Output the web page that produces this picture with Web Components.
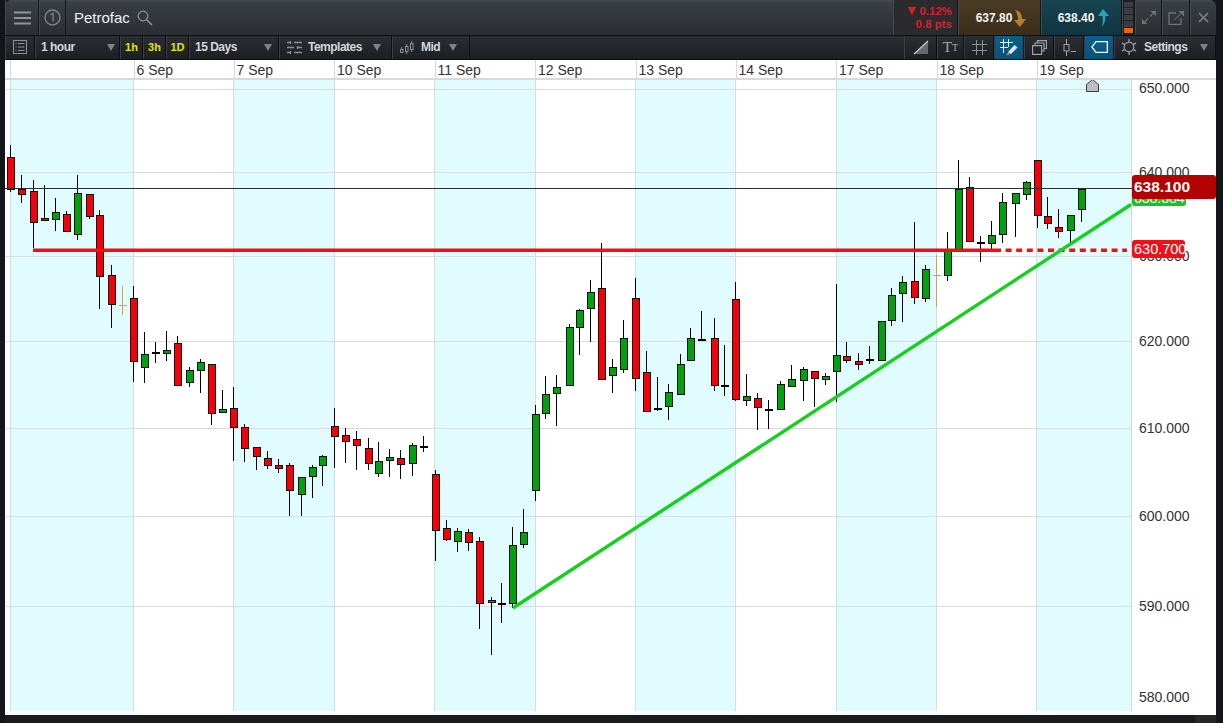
<!DOCTYPE html>
<html><head><meta charset="utf-8"><style>
html,body{margin:0;padding:0;background:#14171b;overflow:hidden}
body{width:1223px;height:723px;font-family:"Liberation Sans",Arial,sans-serif}
</style></head><body>
<chart-window></chart-window>
<script>
const ICON={
menu:'<svg width="17" height="14" viewBox="0 0 17 14"><path d="M0 1.500h17M0 7h17M0 12.500h17" stroke="#8f959b" stroke-width="2.200"/></svg>',
one:'<svg width="17" height="17" viewBox="0 0 17 17"><circle cx="8.500" cy="8.500" r="7.500" fill="none" stroke="#7e848a" stroke-width="1.300"/><path d="M6.500 5.800 9 4.400V12.600" fill="none" stroke="#7e848a" stroke-width="1.300"/></svg>',
search:'<svg width="16" height="16" viewBox="0 0 16 16"><circle cx="6" cy="6" r="4.800" fill="none" stroke="#8f959b" stroke-width="1.200"/><path d="M9.500 9.500 15 15" stroke="#8f959b" stroke-width="1.500"/></svg>',
list:'<svg width="14" height="14" viewBox="0 0 14 14"><rect x=".5" y=".5" width="13" height="13" fill="none" stroke="#8b9197"/><path d="M2.500 3.500h1M5 3.500h6.500M2.500 7h1M5 7h6.500M2.500 10.500h1M5 10.500h6.500" stroke="#8b9197"/></svg>',
sliders:'<svg width="15" height="13" viewBox="0 0 15 13"><path d="M0 1.500h3M7 1.500h8M0 6.500h7M11 6.500h4M0 11.500h3M7 11.500h8" stroke="#8b9197" stroke-width="1.300"/><path d="M3.500 0v3M10.500 5v3M3.500 10v3" stroke="#8b9197" stroke-width="1.300"/></svg>',
candles:'<svg width="14" height="13" viewBox="0 0 14 13"><g fill="none" stroke="#8b9197"><rect x=".5" y="8.500" width="2.500" height="3"/><path d="M1.700 6v2.500"/><rect x="5.500" y="5.500" width="2.500" height="5"/><path d="M6.700 3v2.500M6.700 10.500V13"/><rect x="10.500" y="2.500" width="2.500" height="6"/><path d="M11.700 0v2.500M11.700 8.500V11"/></g></svg>',
draw:'<svg width="16" height="16" viewBox="0 0 16 16"><path d="M1 15 15 2v13z" fill="#666b70"/><path d="M1 15 15 2" stroke="#c6cacd" stroke-width="1.200"/></svg>',
grid:'<svg width="15" height="15" viewBox="0 0 15 15"><path d="M4.500 0v15M10.500 0v15M0 4.500h15M0 10.500h15" stroke="#8b9197"/></svg>',
gridpen:'<svg width="18" height="17" viewBox="0 0 18 17"><path d="M3.500 0v14M8.500 0v8M0 3.500h13M0 8.500h8" stroke="#e7eef2"/><path d="M8 13l6.500-7 3 2.500-6.500 6.500z" fill="#dbe6ec"/><path d="M6.500 16.500l1.500-3.500 2.500 2z" fill="#f08a2c"/></svg>',
layers:'<svg width="15" height="15" viewBox="0 0 15 15"><g fill="none" stroke="#9ca2a7" stroke-width="1.200"><rect x=".6" y="5.600" width="9" height="8.800"/><path d="M3 5.500V3h9v8h-2.500"/><path d="M5.500 3V.6h9V8.500H12"/></g></svg>',
order:'<svg width="13" height="17" viewBox="0 0 13 17"><g fill="none" stroke="#9ca2a7"><path d="M3.500 0v5M3.500 12v5"/><rect x="1" y="5.500" width="5" height="6.500"/></g><path d="M8 12.500h5" stroke="#9ca2a7"/></svg>',
tag:'<svg width="17" height="12" viewBox="0 0 17 12"><path d="M5 .7H16.300V11.300H5L.9 6z" fill="none" stroke="#f0f5f8" stroke-width="1.300"/></svg>',
gear:'<svg width="16" height="16" viewBox="0 0 16 16"><circle cx="8" cy="8" r="4.700" fill="none" stroke="#8b9197" stroke-width="1.500"/><path d="M8 0v3M8 13v3M1 4l2.600 1.500M12.400 10.500 15 12M1 12l2.600-1.500M12.400 5.500 15 4" stroke="#8b9197" stroke-width="1.500"/></svg>',
expand:'<svg width="14" height="13" viewBox="0 0 14 13"><path d="M8.500 0H14v5zM0 13V8l5.500 5z" fill="#6d7378"/><path d="M11 2.500 8 5.500M3 10.500l3-3" stroke="#6d7378" stroke-width="1.200"/></svg>',
pop:'<svg width="16" height="14" viewBox="0 0 16 14"><path d="M8 2H1v11.300h12V7" fill="none" stroke="#6d7378" stroke-width="1.300"/><path d="M11 0h5v5zM6 9l7-6.500" fill="#6d7378" stroke="#6d7378"/></svg>',
close:'<svg width="11" height="11" viewBox="0 0 11 11"><path d="M1 1l9 9M10 1l-9 9" stroke="#7b8186" stroke-width="1.600"/></svg>',
down:'<svg width="13" height="18" viewBox="0 0 13 18"><path d="M1 1c5 1 7 4 7 9h4l-6 8-6-7h4C4 7 3 4 1 1z" fill="#b5802a"/></svg>',
up:'<svg width="13" height="18" viewBox="0 0 13 18"><path d="M7 0l6 7H9.500c0 5-1 8-4 11 1.500-4 1.500-7 1-11H2z" fill="#27a3b8"/></svg>'
};
function def(name,css,html){
  customElements.define(name,class extends HTMLElement{
    constructor(){super();const s=this.attachShadow({mode:'open'});
      s.innerHTML='<style>'+css+'</style>'+(typeof html==='function'?html(this):html);}
  });
}
def('tool-cell',`
:host{display:flex;align-items:center;height:100%;box-sizing:border-box;padding-bottom:1px;border-right:1px solid #0c0e10;border-left:1px solid #3a3f45;color:#d4d7da;font:bold 12px "Liberation Sans",sans-serif;letter-spacing:-.5px;flex:none}
:host([active]){background:linear-gradient(#0a5f8c,#07527a)}
:host([center]){justify-content:center}
:host([yellow]){color:#e6e400;font-size:11px;letter-spacing:0;justify-content:center}
:host([caret]) .c{display:block}
.c{display:none;margin-left:auto;width:0;height:0;border:4px solid transparent;border-top:7px solid #7d8388;border-bottom:0;margin-right:var(--cr,4px)}
`,`<slot></slot><span class="c"></span>`);

def('top-bar',`
:host{display:flex;height:36px;background:linear-gradient(#4b5056 0,#3a3f45 2px,#2a2e33 100%);border-radius:6px 6px 0 0;color:#fff;border-bottom:1px solid #0d0f11;box-sizing:border-box}
.cell{display:flex;align-items:center;justify-content:center;border-right:1px solid #14171a;border-left:1px solid #45494e;box-sizing:border-box;flex:none}
.title{font:15px "Liberation Sans",sans-serif;color:#eef0f2;display:flex;align-items:center;gap:7px;padding-left:8px;flex:1}
.chg{width:65px;flex-direction:column;color:#d8202c;font:bold 11.500px/13px "Liberation Sans",sans-serif;background:#2b2a2d;align-items:flex-end;padding-right:5px}
.chg i{display:inline-block;width:0;height:0;border:4.500px solid transparent;border-top:8px solid #e21c26;border-bottom:0;margin-right:3px}
.price{font:bold 12px "Liberation Sans",sans-serif;gap:2px;color:#f2f2f2;padding-left:4px}
.sell{width:83px;background:linear-gradient(#4a3b23,#3a2e1c)}
.buy{width:81px;background:linear-gradient(#174450,#0f3540)}
.vol{width:13px;flex-direction:column;justify-content:stretch;gap:1px;padding:2px 1px 2px;background:#1d2024}
.vol b{display:block;flex:1;width:100%;background:#3a3e43}
.vol b.on{background:#e8621a}
`,`
<div class="cell" style="width:34px">${ICON.menu}</div>
<div class="cell" style="width:27px">${ICON.one}</div>
<div class="title"><span>Petrofac</span>${ICON.search}</div>
<div class="cell chg"><span><i></i>0.12%</span><span>0.8 pts</span></div>
<div class="cell price sell"><span>637.80</span>${ICON.down}</div>
<div class="cell price buy"><span>638.40</span>${ICON.up}</div>
<div class="cell vol"><b></b><b></b><b></b><b></b><b class="on"></b></div>
<div class="cell" style="width:27px">${ICON.expand}</div>
<div class="cell" style="width:28px">${ICON.pop}</div>
<div class="cell" style="width:26px;border-right:0">${ICON.close}</div>
`);

def('tool-bar',`
:host{display:flex;height:24px;background:linear-gradient(#2b2f34,#1b1e22);box-sizing:border-box;border-bottom:1px solid #0b0d0f}
.sp{flex:1}
svg{flex:none}
`,`
<tool-cell center style="width:30px">${ICON.list}</tool-cell>
<tool-cell caret style="width:85px;padding-left:5px">1 hour</tool-cell>
<tool-cell yellow style="width:23px">1h</tool-cell>
<tool-cell yellow style="width:23px">3h</tool-cell>
<tool-cell yellow style="width:23px">1D</tool-cell>
<tool-cell caret style="width:90px;padding-left:5px;--cr:6px">15 Days</tool-cell>
<tool-cell caret style="width:113px;padding-left:7px;--cr:10px">${ICON.sliders}<span style="margin-left:6px">Templates</span></tool-cell>
<tool-cell caret style="width:78px;padding-left:7px;--cr:12px">${ICON.candles}<span style="margin-left:7px">Mid</span></tool-cell>
<div class="sp"></div>
<tool-cell center style="width:33px">${ICON.draw}</tool-cell>
<tool-cell center style="width:27px;font:15px 'Liberation Serif',serif;color:#a4a9ad;letter-spacing:0">T<small style="font-size:10px">T</small></tool-cell>
<tool-cell center style="width:30px">${ICON.grid}</tool-cell>
<tool-cell center active style="width:30px">${ICON.gridpen}</tool-cell>
<tool-cell center style="width:30px">${ICON.layers}</tool-cell>
<tool-cell center style="width:30px">${ICON.order}</tool-cell>
<tool-cell center active style="width:30px">${ICON.tag}</tool-cell>
<tool-cell caret style="width:102px;padding-left:6px;--cr:7px">${ICON.gear}<span style="margin-left:7px">Settings</span></tool-cell>
`);

const DAYS=[['',123.5],['6 Sep',100],['7 Sep',100.5],['10 Sep',100.5],['11 Sep',100.5],['12 Sep',100.5],['13 Sep',100],['14 Sep',100.5],['17 Sep',100.5],['18 Sep',100],['19 Sep',180]];
def('date-axis',`
:host{display:flex;height:20px;background:#fff;border-bottom:2px solid #d9d9d9;box-sizing:border-box;padding-left:5px;color:#333;font:14px "Liberation Sans",sans-serif;flex:none}
div{box-sizing:border-box;border-left:1px solid #d6dadb;padding:2px 0 0 2px;white-space:nowrap;line-height:17px;flex:none}
`,DAYS.map(([t,w],i)=>`<div style="width:${w}px">${t}</div>`).join(''));

/* [x, wickTop, wickBottom, bodyTop, bodyBottom, colour r/g/k/o] */
const C=[[10.7,145,192,157,189,'r'],[21.7,175,203,189,194,'r'],[33.7,180,248,191,222,'r'],[44.3,185,218,218,220,'r'],[55.3,198,231,212,219,'g'],[66.7,211,231,214,231,'r'],[77.7,175,240,193,234,'g'],[89,194,219,194,216,'r'],[99.5,210,309,215,276,'r'],[111.3,265,328,275,304,'r'],[122.5,286,315,305,305,'o'],[133.7,286,382,298,361,'r'],
[144.3,332,383,354,367,'g'],[155.3,342,363,353,353,'k'],[166.5,331,361,350,353,'g'],[177.7,336,385,343,385,'r'],[189.3,367,387,370,382,'g'],[200.5,359,393,362,370,'g'],[211.7,364,425,364,413,'r'],[222.7,390,412,409,412,'g'],[233.7,387,461,408,427,'r'],[244.7,424,462,427,448,'r'],[256,447,470,447,456,'r'],[267.3,451,469,458,465,'r'],[278.5,459,473,465,468,'r'],[289.7,463,516,465,490,'r'],
[301,477,516,477,494,'g'],[312,465,498,467,476,'g'],[322.7,455,486,456,465,'g'],[334.3,408,468,426,436,'r'],[345.7,428,463,435,441,'r'],[356.3,431,470,439,445,'r'],[368,438,470,448,463,'r'],[378.7,442,477,461,473,'g'],[389.7,449,477,457,460,'g'],[400.7,450,479,458,464,'r'],[412.3,443,476,445,463,'g'],[423.7,436,452,447,447,'k'],[435,470,561,474,530,'r'],[446,520,541,528,539,'r'],[457,528,552,531,541,'g'],[468,529,551,532,542,'r'],[479,537,629,541,603,'r'],[491,597,655,600,602,'g'],[501.3,583,623,604,604,'k'],[512.7,527,608,545,603,'g'],[523.7,509,548,532,544,'g'],[535,405,501,414,490,'g'],
[545.7,376,419,394,413,'g'],[556.7,375,426,387,393,'g'],[569,324,385,327,385,'g'],[579.7,309,355,310,327,'g'],[590.7,280,342,292,308,'g'],[601.7,243,379,288,379,'r'],[612.7,359,393,367,375,'g'],[623.7,320,373,338,369,'g'],[635.7,278,391,298,378,'r'],[646.7,351,411,372,411,'r'],[657.7,377,411,409,409,'k'],[668.7,384,420,392,406,'g'],[680,354,394,364,394,'g'],[690.7,328,360,338,360,'g'],[701.7,311,340,340,340,'k'],[714,318,391,338,385,'r'],[724.7,345,396,386,386,'k'],[735.5,282,401,299,399,'r'],
[746.7,374,406,396,400,'g'],[757.7,393,430,398,407,'r'],[768.7,400,429,410,410,'k'],[780,381,409,384,409,'g'],[791.7,365,387,379,386,'g'],[803,367,401,369,380,'g'],[814,371,407,371,378,'r'],[825,373,385,376,379,'g'],[836,284,402,355,371,'g'],[846.7,342,363,356,360,'r'],[858.7,353,370,361,364,'r'],[869.7,346,364,360,360,'k'],[881,321,360,321,360,'g'],[891.7,288,326,295,320,'g'],[902.7,276,322,282,293,'g'],[914,222,304,281,297,'r'],[925,265,302,269,298,'g'],[936.7,255,307,275,275,'o'],[947.7,232,281,249,275,'g'],
[958.7,160,250,189,250,'g'],[969.7,177,241,187,241,'r'],[980.7,236,262,243,243,'k'],[991.7,221,250,235,243,'g'],[1002.7,193,243,202,234,'g'],[1015,193,237,193,203,'g'],[1026,181,200,182,194,'g'],[1037,160,228,160,215,'r'],[1047.7,197,229,216,223,'r'],[1058.7,209,238,227,231,'r'],[1070,215,243,215,230,'g'],[1081,188,222,189,209,'g']];

function candles(){
  const fill={r:'#f5000a',g:'#00a010'};
  return C.map(([x,wt,wb,bt,bb,c])=>{
    const f=Math.floor(x);
    if(c==='o')return `<rect x="${f}" y="${wt}" width="1" height="${wb-wt}" fill="#d8a040"/><rect x="${f-3}" y="${bt}" width="8" height="1" fill="#d8a040"/>`;
    if(c==='k')return `<rect x="${f}" y="${wt}" width="1" height="${wb-wt}" fill="#000"/><rect x="${f-3}" y="${bt-1}" width="8" height="2" fill="#000"/>`;
    return `<rect x="${f}" y="${wt}" width="1" height="${wb-wt}" fill="#000"/><rect x="${f-2.5}" y="${bt+.5}" width="7" height="${bb-bt}" fill="${fill[c]}" stroke="#111" stroke-width="1"/>`;
  }).join('');
}
const BANDS=[[10,133],[233,334],[434,535],[635,735],[836,936],[1036,1131]];
const VL=[10,133,233,334,434,535,635,735,836,936,1036,1131];
const HL=[89,172,256,341,428,516,606];
def('plot-area',`:host{display:block;width:1127px;height:635px;flex:none}svg{display:block}`,`
<svg width="1127" height="635" viewBox="5 80 1127 635" shape-rendering="crispEdges">
<rect x="5" y="80" width="1127" height="635" fill="#fff"/>
${BANDS.map(([a,b])=>`<rect x="${a}" y="80" width="${b-a}" height="631" fill="#e0fcff"/>`).join('')}
${HL.map(y=>`<rect x="6" y="${y}" width="1125" height="1" fill="#d7dcdd"/>`).join('')}
${VL.map(x=>`<rect x="${x}" y="80" width="1" height="631" fill="#d3dcde"/>`).join('')}
<rect x="1131" y="80" width="1" height="631" fill="#cfd8da"/>
${candles()}
<rect x="5" y="188" width="1127" height="1" fill="#2c3030"/>
<g shape-rendering="auto">
<rect x="33" y="248.500" width="962" height="3.500" fill="#f00f14"/>
<path d="M995 250.250H1127" stroke="#f00f14" stroke-width="3.500" stroke-dasharray="6 4.600" fill="none"/>
<path d="M513 608 1131 204.500" stroke="#17cf1f" stroke-width="3.400" fill="none"/>
<path d="M1086.500 91.500V84.500L1092.500 79.500 1098.500 84.500V91.500z" fill="#bdbdbd" stroke="#3c3c3c"/></g>
</svg>`);

const AX=[['650.000',88],['640.000',172],['630.000',256],['620.000',341],['610.000',428],['600.000',516],['590.000',606],['580.000',697]];
def('price-tag',`
:host{position:absolute;left:0;box-sizing:border-box;display:flex;align-items:center;padding-left:2px;color:#fff;font-family:"Liberation Sans",sans-serif;border-radius:3px}
`,`<slot></slot>`);
def('price-axis',`
:host{display:block;position:relative;width:84px;height:635px;background:#fff;flex:none;color:#333;font:14px "Liberation Sans",sans-serif}
.t{position:absolute;left:7px;line-height:16px}
`,`
${AX.map(([t,y])=>`<span class="t" style="top:${y-88}px">${t}</span>`).join('')}
<price-tag style="top:109px;width:54px;height:17px;background:#18c41f;font-size:14px">638.384</price-tag>
<price-tag style="top:95px;width:84px;height:24px;background:#b30000;font-size:15.500px;font-weight:bold">638.100</price-tag>
<price-tag style="top:160px;width:53px;height:18px;background:#ee1116;font-size:14.500px">630.700</price-tag>
`);
def('chart-pane',`
:host{display:flex;flex-direction:column;height:655px;background:#fff}
.row{display:flex;flex:none}
`,`<date-axis></date-axis><div class="row"><plot-area></plot-area><price-axis></price-axis></div>`);
def('chart-window',`
:host{display:flex;flex-direction:column;width:1223px;height:723px;box-sizing:border-box;padding:0 7px 0 5px;background:#12151a}
.foot{flex:1;background:#171a1e;display:flex;justify-content:flex-end}
.foot i{width:21px;background:#24282c}
`,`<top-bar></top-bar><tool-bar></tool-bar><chart-pane></chart-pane><div class="foot"><i></i></div>`);
</script>
</body></html>
